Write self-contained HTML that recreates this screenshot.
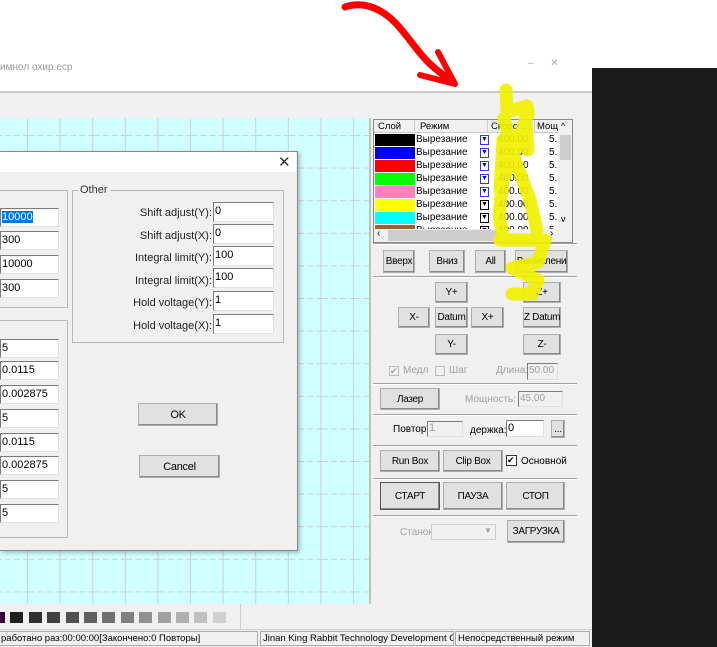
<!DOCTYPE html>
<html><head><meta charset="utf-8"><style>
*{box-sizing:border-box;margin:0;padding:0}
body{width:717px;height:647px;overflow:hidden;background:#fff;position:relative;font-family:"Liberation Sans",sans-serif;font-size:10px;color:#000}
.a{position:absolute}
.btn{position:absolute;background:#e1e1e1;border:1px solid #adadad;box-shadow:inset -1px -1px 0 #888;display:flex;align-items:center;justify-content:center;font-size:10px;letter-spacing:-0.3px;white-space:nowrap;overflow:hidden}
.inp{position:absolute;background:#fff;border:1px solid #7a7a7a;border-right-color:#e0e0e0;border-bottom-color:#e0e0e0;font-size:11px;padding-left:1px;line-height:16px;overflow:hidden;white-space:nowrap}
.lbl{position:absolute;font-size:11px;text-align:right;color:#222}
.grp{position:absolute;border:1px solid #b8b8b8}
.sep{position:absolute;left:373px;width:204px;height:2px;border-top:1px solid #a0a0a0;border-bottom:1px solid #fff}
.dis{color:#a0a0a0}
</style></head><body>
<div class="a" style="left:0;top:62px;font-size:10px;color:#999">имнол охир.ecp</div>
<div class="a" style="left:528px;top:58px;color:#aaa">–&nbsp;&nbsp;&nbsp;&nbsp;&nbsp;&nbsp;✕</div>
<div class="a" style="left:0;top:91px;width:592px;height:2px;background:#c8c8c8"></div>
<div class="a" style="left:0;top:93px;width:592px;height:537px;background:#f0f0f0"></div>
<!-- canvas -->
<svg class="a" style="left:0;top:118px" width="369" height="486">
<defs><pattern id="g" x="-4" y="17" width="32.6" height="32.6" patternUnits="userSpaceOnUse">
<rect width="32.6" height="32.6" fill="#d0ffff"/>
<line x1="31.5" y1="0" x2="31.5" y2="32.6" stroke="#c4d4d4" stroke-width="1"/>
<line x1="0" y1="0.5" x2="32.6" y2="0.5" stroke="#c8d0d0" stroke-width="1" stroke-dasharray="6 3"/>
</pattern></defs>
<rect width="369" height="486" fill="url(#g)"/>
</svg>
<div class="a" style="left:369px;top:118px;width:2px;height:486px;background:#c0c0c0"></div>
<!-- right panel -->
<div class="a" style="left:373px;top:119px;width:200px;height:124px;border:1px solid #888;background:#fff"></div>
<div id="rows"></div>
<div class="a" style="left:374px;top:120px;width:184px;height:13px;background:#f0f0f0;border-bottom:1px solid #ccc;font-size:9.5px">
<span class="a" style="left:4px;top:1px">Слой</span><span class="a" style="left:46px;top:1px">Режим</span><span class="a" style="left:117px;top:1px">Скоро...</span><span class="a" style="left:163px;top:1px">Мощ</span>
<span class="a" style="left:40px;top:0;height:13px;border-left:1px solid #ccc"></span><span class="a" style="left:113px;top:0;height:13px;border-left:1px solid #ccc"></span><span class="a" style="left:160px;top:0;height:13px;border-left:1px solid #ccc"></span></div>
<div class="a" style="left:558px;top:120px;width:14px;height:109px;background:#f0f0f0"></div>
<div class="a" style="left:560px;top:135px;width:11px;height:25px;background:#cdcdcd"></div>
<div class="a" style="left:561px;top:121px;font-size:9px">^</div>
<div class="a" style="left:561px;top:214px;font-size:9px">v</div>
<div class="a" style="left:374px;top:229px;width:198px;height:13px;background:#f0f0f0"></div>
<div class="a" style="left:388px;top:230px;width:110px;height:11px;background:#cdcdcd"></div>
<div class="a" style="left:377px;top:228px;font-size:10px">‹</div><div class="a" style="left:550px;top:228px;font-size:10px">›</div>
<div class="sep" style="top:243px"></div>
<div class="btn" style="left:383px;top:250px;width:32px;height:23px">Вверх</div>
<div class="btn" style="left:429px;top:250px;width:36px;height:23px">Вниз</div>
<div class="btn" style="left:475px;top:250px;width:31px;height:23px">All</div>
<div class="btn" style="left:515px;top:250px;width:53px;height:23px">Вычислени</div>
<div class="sep" style="top:276px"></div>
<div class="btn" style="left:435px;top:282px;width:33px;height:21px">Y+</div>
<div class="btn" style="left:523px;top:282px;width:38px;height:21px">Z+</div>
<div class="btn" style="left:398px;top:307px;width:32px;height:21px">X-</div>
<div class="btn" style="left:435px;top:307px;width:33px;height:21px">Datum</div>
<div class="btn" style="left:471px;top:307px;width:33px;height:21px">X+</div>
<div class="btn" style="left:523px;top:307px;width:38px;height:21px">Z Datum</div>
<div class="btn" style="left:435px;top:334px;width:33px;height:21px">Y-</div>
<div class="btn" style="left:523px;top:334px;width:38px;height:21px">Z-</div>
<div class="a dis" style="left:389px;top:366px;width:10px;height:10px;border:1px solid #bbb;font-size:9px;line-height:8px">✔</div>
<div class="a dis" style="left:403px;top:365px">Медл</div>
<div class="a" style="left:435px;top:366px;width:10px;height:10px;border:1px solid #bbb"></div>
<div class="a dis" style="left:449px;top:365px">Шаг</div>
<div class="a dis" style="left:496px;top:365px">Длина:</div>
<div class="inp dis" style="left:527px;top:363px;width:31px;height:17px;background:#f0f0f0;font-size:10px;line-height:14px">50.00</div>
<div class="sep" style="top:383px"></div>
<div class="btn" style="left:380px;top:388px;width:60px;height:22px">Лазер</div>
<div class="a dis" style="left:465px;top:394px">Мощность:</div>
<div class="inp dis" style="left:518px;top:391px;width:45px;height:16px;background:#f0f0f0;font-size:10px;line-height:13px">45.00</div>
<div class="sep" style="top:414px"></div>
<div class="a" style="left:393px;top:424px">Повтор:</div>
<div class="inp dis" style="left:427px;top:421px;width:36px;height:16px;background:#f0f0f0;line-height:13px">1</div>
<div class="a" style="left:470px;top:425px">держка:</div>
<div class="inp" style="left:506px;top:420px;width:38px;height:17px;line-height:14px">0</div>
<div class="btn" style="left:551px;top:420px;width:14px;height:18px">...</div>
<div class="sep" style="top:445px"></div>
<div class="btn" style="left:380px;top:450px;width:60px;height:22px">Run Box</div>
<div class="btn" style="left:443px;top:450px;width:60px;height:22px">Clip Box</div>
<div class="a" style="left:506px;top:455px;width:11px;height:11px;border:1px solid #333;font-size:9px;line-height:9px;background:#fff">✔</div>
<div class="a" style="left:521px;top:456px">Основной</div>
<div class="sep" style="top:478px"></div>
<div class="btn" style="left:380px;top:482px;width:60px;height:28px;border-color:#555">СТАРТ</div>
<div class="btn" style="left:443px;top:482px;width:60px;height:28px">ПАУЗА</div>
<div class="btn" style="left:506px;top:482px;width:59px;height:28px">СТОП</div>
<div class="sep" style="top:515px"></div>
<div class="a dis" style="left:400px;top:527px">Станок:</div>
<div class="a" style="left:431px;top:524px;width:65px;height:16px;border:1px solid #ccc;background:#f0f0f0"></div>
<div class="a dis" style="left:484px;top:526px;font-size:8px">▼</div>
<div class="btn" style="left:507px;top:520px;width:58px;height:23px">ЗАГРУЗКА</div>
<!-- palette -->
<div id="pal"></div>
<div class="a" style="left:240px;top:604px;width:1px;height:25px;background:#ccc"></div>
<div class="a" style="left:0;top:629px;width:592px;height:18px;background:#f0f0f0;border-top:1px solid #ccc"></div>
<div class="a" style="left:0;top:631px;width:258px;height:15px;border:1px solid #aaa;border-left:none;font-size:9.5px;padding-left:1px;line-height:13px">работано раз:00:00:00[Закончено:0 Повторы]</div>
<div class="a" style="left:260px;top:631px;width:194px;height:15px;border:1px solid #aaa;font-size:9.5px;padding-left:2px;line-height:13px;overflow:hidden;white-space:nowrap">Jinan King Rabbit Technology Development Co</div>
<div class="a" style="left:455px;top:631px;width:135px;height:15px;border:1px solid #aaa;font-size:9.5px;padding-left:2px;line-height:13px">Непосредственный режим</div>
<!-- dialog -->
<div class="a" style="left:0;top:151px;width:298px;height:400px;background:#f0f0f0;border:1px solid #888;border-left:none;box-shadow:2px 2px 4px rgba(0,0,0,.25)"></div>
<div class="a" style="left:0;top:152px;width:296px;height:20px;background:#fff"></div>
<div class="a" style="left:278px;top:153px;font-size:15px;color:#333">✕</div>
<div class="grp" style="left:-2px;top:190px;width:70px;height:118px"></div>
<div class="inp" style="left:0;top:208px;width:59px;height:19px"><span style="background:#0078d7;color:#fff">10000</span></div>
<div class="inp" style="left:0;top:231px;width:59px;height:19px">300</div>
<div class="inp" style="left:0;top:255px;width:59px;height:19px">10000</div>
<div class="inp" style="left:0;top:279px;width:59px;height:19px">300</div>
<div class="grp" style="left:72px;top:190px;width:212px;height:153px"></div>
<div class="a" style="left:78px;top:184px;background:#f0f0f0;padding:0 2px;font-size:11px;color:#333">Other</div>
<div class="lbl" style="left:100px;top:207px;width:112px">Shift adjust(Y):</div>
<div class="lbl" style="left:100px;top:230px;width:112px">Shift adjust(X):</div>
<div class="lbl" style="left:100px;top:252px;width:112px">Integral limit(Y):</div>
<div class="lbl" style="left:100px;top:275px;width:112px">Integral limit(X):</div>
<div class="lbl" style="left:100px;top:297px;width:112px">Hold voltage(Y):</div>
<div class="lbl" style="left:100px;top:320px;width:112px">Hold voltage(X):</div>
<div class="inp" style="left:213px;top:202px;width:61px;height:20px">0</div>
<div class="inp" style="left:213px;top:224px;width:61px;height:20px">0</div>
<div class="inp" style="left:213px;top:246px;width:61px;height:20px">100</div>
<div class="inp" style="left:213px;top:268px;width:61px;height:20px">100</div>
<div class="inp" style="left:213px;top:291px;width:61px;height:20px">1</div>
<div class="inp" style="left:213px;top:314px;width:61px;height:20px">1</div>
<div class="grp" style="left:-2px;top:320px;width:70px;height:218px"></div>
<div class="inp" style="left:0;top:339px;width:59px;height:19px">5</div>
<div class="inp" style="left:0;top:361px;width:59px;height:19px">0.0115</div>
<div class="inp" style="left:0;top:385px;width:59px;height:19px">0.002875</div>
<div class="inp" style="left:0;top:409px;width:59px;height:19px">5</div>
<div class="inp" style="left:0;top:433px;width:59px;height:19px">0.0115</div>
<div class="inp" style="left:0;top:456px;width:59px;height:19px">0.002875</div>
<div class="inp" style="left:0;top:480px;width:59px;height:19px">5</div>
<div class="inp" style="left:0;top:504px;width:59px;height:19px">5</div>
<div class="btn" style="left:138px;top:403px;width:80px;height:23px;font-size:11px">OK</div>
<div class="btn" style="left:139px;top:455px;width:81px;height:23px;font-size:11px">Cancel</div>
<!-- black -->
<div class="a" style="left:592px;top:68px;width:125px;height:579px;background:#1a1a1a"></div>
<svg class="a" style="left:0;top:0" width="717" height="647">
<path d="M345 7 C365 0 385 10 400 28 C412 42 418 52 428 62 C436 70 445 76 452 82" stroke="#f00" stroke-width="7" fill="none" stroke-linecap="round"/>
<path d="M438 52 L455 84 L420 75" stroke="#f00" stroke-width="6" fill="none" stroke-linecap="round" stroke-linejoin="round"/>
<g stroke="#f0f000" stroke-width="13" fill="none" stroke-linecap="round" stroke-linejoin="round" opacity="0.92">
<path d="M506 90 L507 112 L527 106 L528 115"/>
<path d="M528 112 L518 142 L503 180 L499 215 L503 238"/>
<path d="M504 118 L515 160 L530 200 L537 230"/>
<path d="M500 240 L545 240 L538 262 L512 268 L538 280 L532 294 L512 294"/>
<path d="M503 140 L500 190"/>
<path d="M525 110 L528 150"/>
</g>
</svg>
<script>
var c=['#000','#00f','#f00','#0f0','#ff80c0','#ff0','#0ff','#a06030'];var h='';
c.forEach(function(x,i){var y=134+i*13;h+='<div class="a" style="left:375px;top:'+y+'px;width:40px;height:12px;background:'+x+'"></div>'+
'<div class="a" style="left:416px;top:'+(y)+'px;font-size:10px">Вырезание</div>'+
'<div class="a" style="left:480px;top:'+(y+1)+'px;width:9px;height:10px;border:1px solid '+(i>4?'#000':'#33f')+';font-size:7px;line-height:8px;text-align:center;color:'+(i>4?'#000':'#00f')+'">▼</div>'+
'<div class="a" style="left:498px;top:'+y+'px;font-size:10px">400.00</div><div class="a" style="left:549px;top:'+y+'px;font-size:10px">5.</div>';});
document.getElementById('rows').innerHTML=h;
var p=['#400040','#202020','#303030','#404040','#505050','#606060','#707070','#808080','#909090','#a0a0a0','#b0b0b0','#c0c0c0','#d0d0d0'];h='';
p.forEach(function(x,i){h+='<div class="a" style="left:'+(i*18.4-8)+'px;top:612px;width:13px;height:11px;background:'+x+'"></div>';});
document.getElementById('pal').innerHTML=h;
</script>
</body></html>
